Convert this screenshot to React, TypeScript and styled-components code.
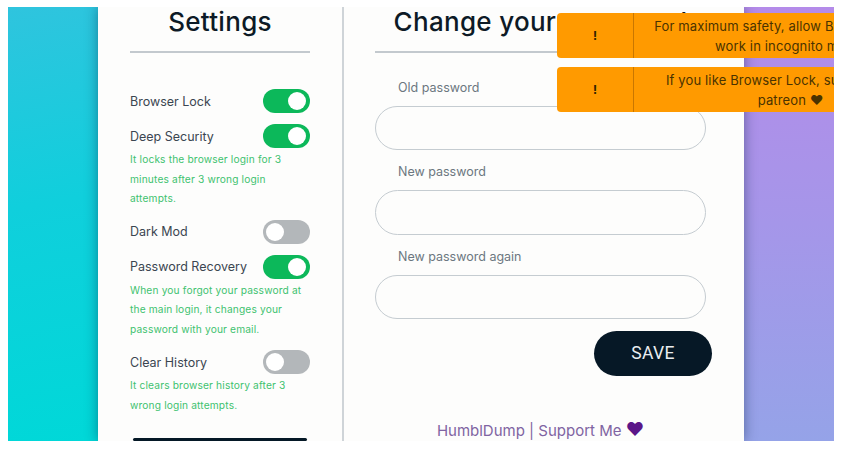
import React from 'react'
import styled, { createGlobalStyle } from 'styled-components'

const GlobalStyle = createGlobalStyle`
  body {
    margin: 0;
    background: #ffffff;
    font-family: Inter, "Noto Sans", sans-serif;
  }
`

const Frame = styled.div`
  position: relative;
  margin: 7px 0 0 8px;
  width: 826px;
  height: 434px;
  display: flex;
  overflow: hidden;
`

const LeftBackdrop = styled.div`
  flex: 0 0 90px;
  background: linear-gradient(170deg, #2fc4de 0%, #10cfdc 45%, #00d8d8 100%);
`

const RightBackdrop = styled.div`
  flex: 1;
  background: linear-gradient(180deg, #b48be9 0%, #a596e9 50%, #95a3e8 100%);
`

const Card = styled.div`
  position: relative;
  z-index: 1;
  flex: 0 0 646px;
  display: flex;
  background: #fdfdfc;
  box-shadow: 0 0 12px rgba(0, 30, 60, 0.45);
`

const SettingsColumn = styled.div`
  flex: 0 0 246px;
  box-sizing: border-box;
  padding: 0 32px;
  border-right: 2px solid #cfd4d8;
  display: flex;
  flex-direction: column;
`

const PasswordColumn = styled.div`
  flex: 1;
  padding: 0 38px 0 31px;
  display: flex;
  flex-direction: column;
`

const Heading = styled.h1`
  margin: 0;
  padding-bottom: 14px;
  border-bottom: 2px solid #c3c9ce;
  font-size: 26px;
  line-height: 30px;
  font-weight: 500;
  letter-spacing: 0.3px;
  color: #0d1a26;
  text-align: center;
  white-space: nowrap;
`

const SettingList = styled.div`
  margin-top: 25px;
  display: flex;
  flex-direction: column;
`

const SettingItem = styled.div`
  margin-top: 11px;
`

const SettingRow = styled.div`
  display: flex;
  align-items: center;
  justify-content: space-between;
  height: 24px;
`

const SettingLabel = styled.span`
  font-size: 12.5px;
  color: #3b4651;
`

const Toggle = styled.span<{ $on: boolean }>`
  position: relative;
  width: 47px;
  height: 24px;
  border-radius: 12px;
  background: ${p => (p.$on ? '#0cb85a' : '#b3b7ba')};

  &::after {
    content: '';
    position: absolute;
    top: 3px;
    left: ${p => (p.$on ? '25px' : '3px')};
    width: 18px;
    height: 18px;
    border-radius: 50%;
    background: #ffffff;
  }
`

const Description = styled.p`
  margin: 2px 0 0;
  font-size: 10.2px;
  letter-spacing: 0.15px;
  line-height: 19.5px;
  color: #3ec26f;
`

const DarkButton = styled.div`
  margin: 23px 3px 0 3px;
  height: 40px;
  border-radius: 20px;
  background: #051826;
`

const FieldLabel = styled.label<{ $first?: boolean }>`
  display: block;
  margin: ${p => (p.$first ? '26px' : '13px')} 0 9px 23px;
  font-size: 12.5px;
  line-height: 18px;
  color: #6c7780;
`

const Field = styled.input`
  box-sizing: border-box;
  width: 100%;
  height: 46px;
  border: 1px solid #c5ccd1;
  border-radius: 23px;
  background: #fdfdfc;
  outline: none;
`

const SaveButton = styled.button`
  align-self: flex-end;
  margin: 12px -6px 0 0;
  width: 118px;
  height: 47px;
  border: none;
  border-radius: 24px;
  background: #061826;
  color: #e9edf0;
  font-family: Roboto, "Liberation Sans", sans-serif;
  font-size: 17.5px;
  letter-spacing: 0.3px;
`

const Footer = styled.div`
  margin-top: 44px;
  text-align: center;
  font-size: 15px;
  line-height: 20px;
  color: #8064a2;
`

const Heart = styled.span`
  color: #5b1688;
  font-size: 18px;
`

const ToastStack = styled.div`
  position: absolute;
  z-index: 2;
  top: 6px;
  left: 549px;
  display: flex;
  flex-direction: column;
  gap: 9px;
`

const Toast = styled.div`
  display: flex;
  width: 390px;
  height: 45px;
  border-radius: 4px;
  background: #ff9a00;
`

const ToastIcon = styled.div`
  flex: 0 0 76px;
  display: flex;
  align-items: center;
  justify-content: center;
  border-right: 1px solid #c97700;
  font-size: 12px;
  font-weight: 700;
  color: #2e2000;
`

const ToastText = styled.div`
  flex: 1;
  display: flex;
  align-items: center;
  justify-content: center;
  padding: 0 8px;
  text-align: center;
  white-space: nowrap;
  font-size: 13px;
  letter-spacing: 0.15px;
  line-height: 20px;
  color: #4a3300;
`

type Setting = { label: string; on: boolean; desc?: string }

const settings: Setting[] = [
  { label: 'Browser Lock', on: true },
  { label: 'Deep Security', on: true, desc: 'It locks the browser login for 3 minutes after 3 wrong login attempts.' },
  { label: 'Dark Mod', on: false },
  { label: 'Password Recovery', on: true, desc: 'When you forgot your password at the main login, it changes your password with your email.' },
  { label: 'Clear History', on: false, desc: 'It clears browser history after 3 wrong login attempts.' },
]

const App = () => {
  return (
    <>
      <GlobalStyle />
      <Frame>
        <LeftBackdrop />
        <Card>
          <SettingsColumn>
            <Heading>Settings</Heading>
            <SettingList>
              {settings.map(s => (
                <SettingItem key={s.label}>
                  <SettingRow>
                    <SettingLabel>{s.label}</SettingLabel>
                    <Toggle $on={s.on} />
                  </SettingRow>
                  {s.desc && <Description>{s.desc}</Description>}
                </SettingItem>
              ))}
            </SettingList>
            <DarkButton />
          </SettingsColumn>
          <PasswordColumn>
            <Heading>Change your password</Heading>
            <FieldLabel $first>Old password</FieldLabel>
            <Field type="password" />
            <FieldLabel>New password</FieldLabel>
            <Field type="password" />
            <FieldLabel>New password again</FieldLabel>
            <Field type="password" />
            <SaveButton>SAVE</SaveButton>
            <Footer>
              HumblDump | Support Me <Heart>♥</Heart>
            </Footer>
          </PasswordColumn>
        </Card>
        <RightBackdrop />
        <ToastStack>
          <Toast>
            <ToastIcon>!</ToastIcon>
            <ToastText>
              For maximum safety, allow Browser Lock to
              <br />
              work in incognito mode.
            </ToastText>
          </Toast>
          <Toast>
            <ToastIcon>!</ToastIcon>
            <ToastText>
              If you like Browser Lock, support me on
              <br />
              patreon ♥
            </ToastText>
          </Toast>
        </ToastStack>
      </Frame>
    </>
  )
}

export default App
